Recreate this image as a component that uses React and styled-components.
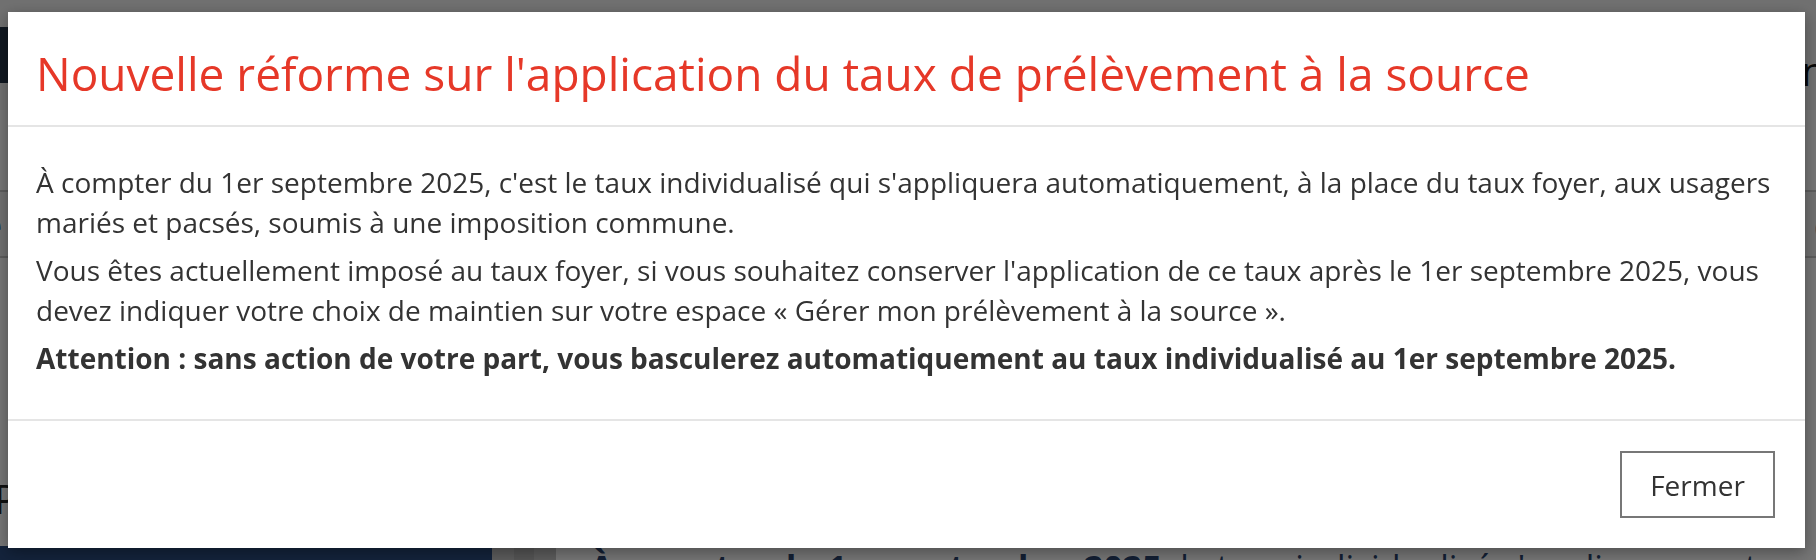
import React from "react";
import styled, { createGlobalStyle } from "styled-components";

const GlobalStyle = createGlobalStyle`
  html, body {
    margin: 0;
    padding: 0;
    background: #ffffff;
    font-family: "Open Sans", "Liberation Sans", sans-serif;
    overflow: hidden;
  }
`;

// ======= Page behind the modal START ========
const Page = styled.div`
  width: 1816px;
  height: 560px;
  display: flex;
  flex-direction: column;
  background: #ffffff;
`;

const TopBar = styled.header`
  height: 110px;
  display: flex;
  align-items: center;
  justify-content: space-between;
  background: #f4f4f4;
`;

const Logo = styled.div`
  width: 60px;
  height: 56px;
  background: #243447;
`;

const UserName = styled.span`
  font-size: 40px;
  color: #111;
  margin: 30px -20px 0 0;
`;

const TabBand = styled.nav`
  margin-top: 80px;
  height: 64px;
  display: flex;
  align-items: center;
  justify-content: space-between;
  border-top: 2px solid #c8c8c8;
  border-bottom: 2px solid #c8c8c8;
  background: #f2f2f2;
  font-size: 40px;
  color: #1e4b8a;
`;

const Tab = styled.span`
  margin: ${(p) => (p.$right ? "0 -20px 0 0" : "0 0 0 -20px")};
`;

const Content = styled.div`
  flex: 1;
  display: grid;
  grid-template-columns: 492px 22px 20px 22px 1fr;
  align-items: end;
`;

const SideNav = styled.aside`
  align-self: stretch;
  display: flex;
  flex-direction: column;
  justify-content: flex-end;
  font-size: 40px;
  color: #222;
`;

const SideLabel = styled.span`
  margin: 0 0 20px -6px;
`;

const SideCard = styled.div`
  height: 14px;
  background: #2a4c80;
`;

const Stripe = styled.div`
  height: 14px;
  background: ${(p) => p.$tone};
`;

const Lead = styled.p`
  margin: 0 0 -30px 34px;
  font-size: 34px;
  line-height: 46px;
  font-weight: 700;
  color: #2a4470;
  white-space: nowrap;
  overflow: hidden;

  span {
    font-weight: 400;
  }
`;
// ======= Page behind the modal END ========

const Backdrop = styled.div`
  position: fixed;
  inset: 0;
  background: rgba(0, 0, 0, 0.54);
`;

const Dialog = styled.div`
  position: fixed;
  top: 12px;
  left: 8px;
  width: 1797px;
  background: #ffffff;
  box-shadow: 0 4px 14px rgba(0, 0, 0, 0.35);
  color: #333333;
`;

const DialogHeader = styled.div`
  padding: 31px 28px 22px;
  border-bottom: 2px solid #e5e5e5;
`;

const DialogTitle = styled.h2`
  margin: 0;
  font-size: 46px;
  line-height: 60px;
  font-weight: 400;
  color: #e63828;
`;

const DialogBody = styled.div`
  padding: 35px 28px 33px;
  border-bottom: 2px solid #e5e5e5;
`;

const Paragraph = styled.p`
  margin: 0 0 8px;
  font-size: 28px;
  line-height: 40px;
  font-weight: ${(p) => (p.$strong ? 700 : 400)};
`;

const DialogFooter = styled.div`
  display: flex;
  justify-content: flex-end;
  padding: 30px;
`;

const CloseButton = styled.button`
  width: 155px;
  height: 67px;
  padding: 0;
  background: #ffffff;
  border: 2px solid #777777;
  border-radius: 0;
  font-family: inherit;
  font-size: 28px;
  color: #333333;
  cursor: pointer;
`;

const App = () => {
  return (
    <>
      <GlobalStyle />
      <Page>
        <TopBar>
          <Logo />
          <UserName>nl</UserName>
        </TopBar>
        <TabBand>
          <Tab>e</Tab>
          <Tab $right>e</Tab>
        </TabBand>
        <Content>
          <SideNav>
            <SideLabel>P</SideLabel>
            <SideCard />
          </SideNav>
          <Stripe $tone="#c8c8c8" />
          <Stripe $tone="#b8b8b8" />
          <Stripe $tone="#c8c8c8" />
          <Lead>
            À compter du 1er septembre 2025,{" "}
            <span>le taux individualisé s'appliquera automatiquement aux r</span>
          </Lead>
        </Content>
      </Page>
      <Backdrop />
      <Dialog role="dialog">
        <DialogHeader>
          <DialogTitle>
            Nouvelle réforme sur l'application du taux de prélèvement à la source
          </DialogTitle>
        </DialogHeader>
        <DialogBody>
          <Paragraph>
            À compter du 1er septembre 2025, c'est le taux individualisé qui
            s'appliquera automatiquement, à la place du taux foyer, aux usagers
            mariés et pacsés, soumis à une imposition commune.
          </Paragraph>
          <Paragraph>
            Vous êtes actuellement imposé au taux foyer, si vous souhaitez
            conserver l'application de ce taux après le 1er septembre 2025, vous
            devez indiquer votre choix de maintien sur votre espace « Gérer mon
            prélèvement à la source ».
          </Paragraph>
          <Paragraph $strong>
            Attention : sans action de votre part, vous basculerez
            automatiquement au taux individualisé au 1er septembre 2025.
          </Paragraph>
        </DialogBody>
        <DialogFooter>
          <CloseButton>Fermer</CloseButton>
        </DialogFooter>
      </Dialog>
    </>
  );
};

export default App;
